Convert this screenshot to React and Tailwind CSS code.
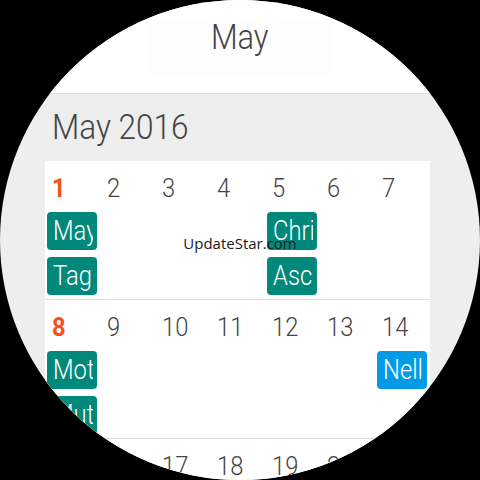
import React from 'react';

const TEAL = 'bg-[#00897b]';
const BLUE = 'bg-[#039be5]';

const weeks = [
    {
        days: ['1', '2', '3', '4', '5', '6', '7'],
        events: [
            [{ col: 0, text: 'May Day', color: TEAL }, { col: 4, text: 'Christi Himmelfahrt', color: TEAL }],
            [{ col: 0, text: 'Tag der Arbeit', color: TEAL }, { col: 4, text: 'Ascension Day', color: TEAL }],
        ],
    },
    {
        days: ['8', '9', '10', '11', '12', '13', '14'],
        events: [
            [{ col: 0, text: "Mother's Day", color: TEAL }, { col: 6, text: 'Nell', color: BLUE }],
            [{ col: 0, text: 'Muttertag', color: TEAL }],
        ],
    },
    {
        days: ['15', '16', '17', '18', '19', '20', '21'],
        events: [],
    },
];

const colStart = [
    'col-start-1',
    'col-start-2',
    'col-start-3',
    'col-start-4',
    'col-start-5',
    'col-start-6',
    'col-start-7',
];

const Week = ({ week }) => (
    <div className="border-b border-[#dedede] pb-[4px]">
        <div className="grid grid-cols-7 h-[51px] pt-[15px]">
            {week.days.map((d, i) => (
                <div
                    key={d}
                    className={
                        'pl-[7px] text-[25px] leading-none ' +
                        (i === 0 ? 'font-bold text-[#f4511e]' : 'font-light text-[#444444]')
                    }
                >
                    <span className="inline-block origin-left scale-x-[0.95]">{d}</span>
                </div>
            ))}
        </div>
        <div className="flex flex-col gap-[7px]">
            {week.events.map((row, r) => (
                <div key={r} className="grid grid-cols-7 h-[38px]">
                    {row.map((ev) => (
                        <div
                            key={ev.text}
                            className={
                                colStart[ev.col] +
                                ' ml-[2px] w-[50px] h-[38px] rounded-[4px] pl-[6px] pr-[4px] text-white font-light text-[28px] leading-[38px] ' +
                                ev.color
                            }
                        >
                            <div className="overflow-hidden whitespace-nowrap">
                                <span className="inline-block origin-left scale-x-[0.85]">{ev.text}</span>
                            </div>
                        </div>
                    ))}
                </div>
            ))}
        </div>
    </div>
);

export default function App() {
    return (
        <div className="w-[480px] h-[480px] bg-black" style={{ fontFamily: 'Roboto, "Liberation Sans", sans-serif' }}>
            <div className="relative w-[480px] h-[480px] rounded-full overflow-hidden bg-[#eeeeee]">
                <div className="h-[94px] bg-white border-b border-[#dcdcdc] flex justify-center pt-[20px]">
                    <div className="w-[186px] h-[58px] rounded-[14px] bg-[#fdfdfd] flex justify-center">
                        <span className="inline-block scale-x-[0.88] text-[35px] leading-none font-light text-[#444444]">
                            May
                        </span>
                    </div>
                </div>
                <div className="pt-[16px] pb-[16px] pl-[52px] text-[35px] leading-none font-light text-[#444444]">
                    <span className="inline-block origin-left scale-x-[0.9]">May 2016</span>
                </div>
                <div className="ml-[45px] w-[385px] bg-white">
                    {weeks.map((w, i) => (
                        <Week key={i} week={w} />
                    ))}
                </div>
                <div
                    className="absolute left-0 right-0 top-[232px] text-center text-[15px] text-[#1a1a1a]"
                    style={{ fontFamily: '"Open Sans", "Noto Sans", sans-serif' }}
                >
                    UpdateStar.com
                </div>
            </div>
        </div>
    );
}
